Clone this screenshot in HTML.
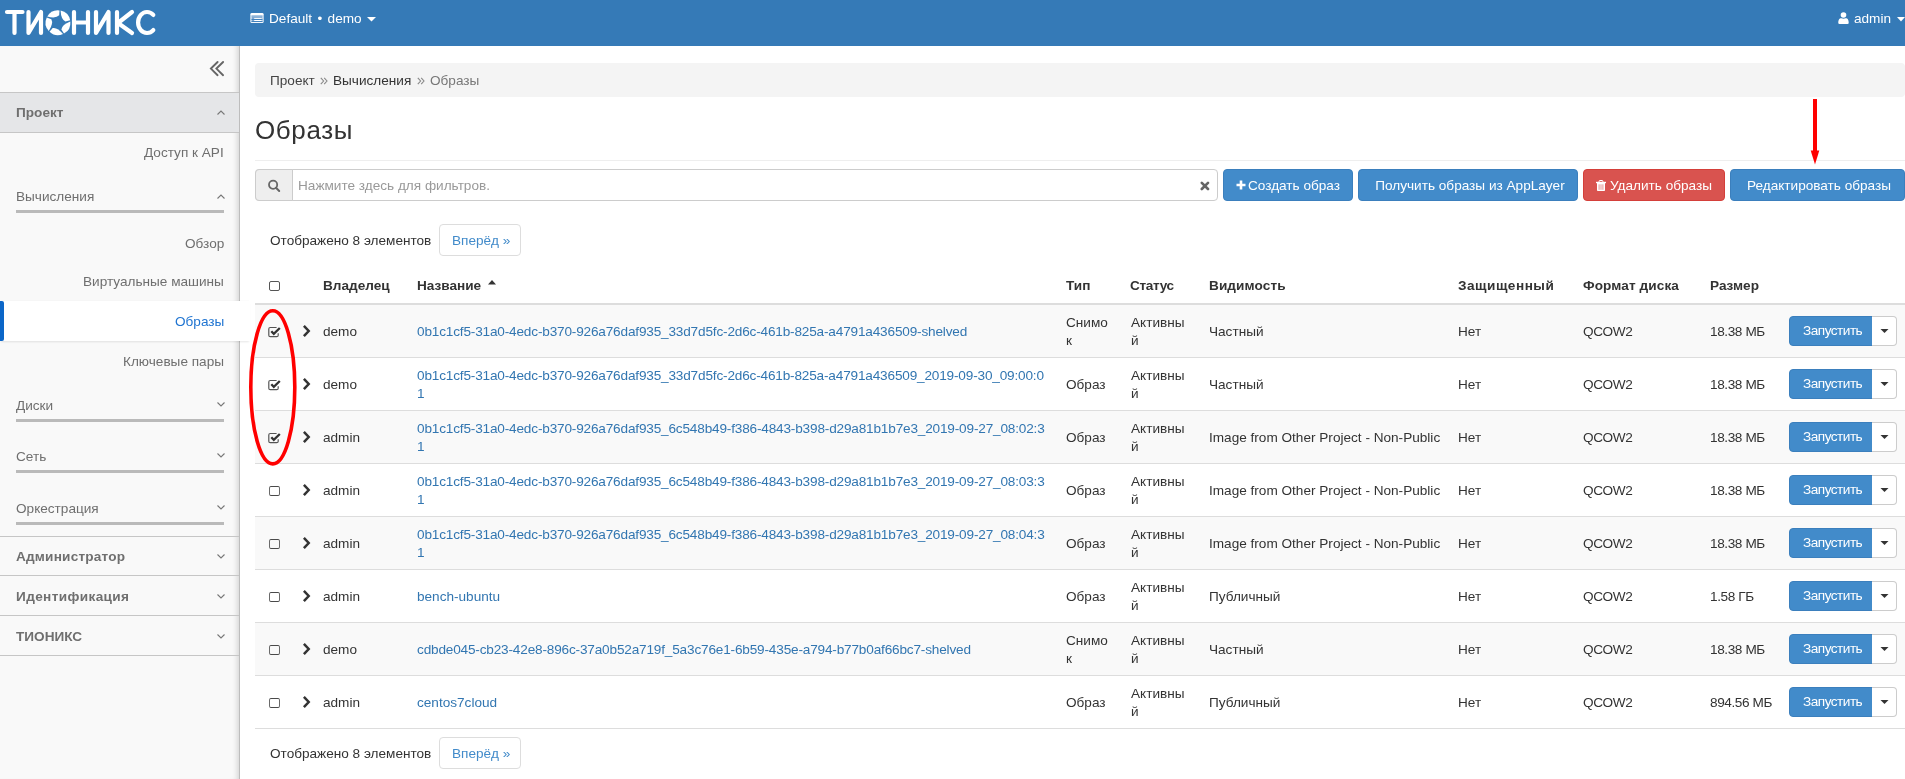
<!DOCTYPE html>
<html><head><meta charset="utf-8">
<style>
*{box-sizing:border-box;margin:0;padding:0}
html,body{width:1905px;height:779px;overflow:hidden;background:#fff;font-family:"Liberation Sans",sans-serif;color:#333}
.a{position:absolute}
.t{position:absolute;white-space:nowrap;will-change:transform;font-size:13.6px;line-height:18px}
.b{font-weight:bold}
#hdr{left:0;top:0;width:1905px;height:46px;background:#357ab7}
#side{left:0;top:46px;width:240px;height:733px;background:#f9f9f9;border-right:1px solid #bdbdbd;box-shadow:inset -6px 0 6px -5px rgba(0,0,0,.18)}
.sec{left:0;width:239px;height:40px;border-top:1px solid #c6c6c6}
.sgray{color:#6f6f6f}
.uline{left:16px;width:208px;height:3px;background:#bababa}
.chev{position:absolute}
.bc{left:255px;top:63px;width:1650px;height:34px;background:#f4f4f4;border-radius:4px}
.btn{position:absolute;will-change:transform;top:169px;height:32px;border-radius:4px;color:#fff;font-size:13.6px;line-height:31px;text-align:center;white-space:nowrap}
.bp{background:#428bca;border:1px solid #3b7fbd}
.bd{background:#d9534f;border:1px solid #d43f3a}
.row{position:absolute;left:255px;width:1650px;height:53px;border-bottom:1px solid #dddddd}
.odd{background:#f9f9f9}
.lnk{color:#3276b1}
.uu{letter-spacing:-.17px}
.ns{letter-spacing:-.4px}
</style></head><body>
<!-- header -->
<div id="hdr" class="a">
  <svg class="a" style="left:0;top:0" width="170" height="46" viewBox="0 0 170 46">
    <g fill="none" stroke="#fff" stroke-width="4.2" stroke-linecap="round" stroke-linejoin="round">
      <path d="M7 12 H22.5 M14.5 12 V33"/>
      <path d="M28.5 12 V33 L41 12 V33"/>
      <path d="M74 12 V33 M88 12 V33 M74 22.5 H88"/>
      <path d="M96 12 V33 L108.5 12 V33"/>
      <path d="M117 12 V33 M132 12 L118 23 L132 33"/>
      <path d="M153.3 14.9 A9 10.5 0 1 0 153.3 30.1"/>
    </g>
    <g fill="#fff">
<path d="M47.26 16.50 A12.4 12.4 0 0 1 59.51 10.39 L59.17 15.29 Q55.87 18.85 47.26 16.50 Z"/>
<path d="M60.58 10.57 A12.4 12.4 0 0 1 70.17 20.33 L65.41 21.53 Q61.00 19.48 60.58 10.57 Z"/>
<path d="M70.33 21.40 A12.4 12.4 0 0 1 64.01 33.55 L61.40 29.38 Q61.99 24.56 70.33 21.40 Z"/>
<path d="M63.04 34.03 A12.4 12.4 0 0 1 49.54 31.77 L52.70 28.00 Q57.46 27.07 63.04 34.03 Z"/>
<path d="M48.79 31.00 A12.4 12.4 0 0 1 46.76 17.46 L51.32 19.30 Q53.68 23.54 48.79 31.00 Z"/>
</g>
  </svg>
  <svg class="a" style="left:250px;top:12px" width="14" height="12" viewBox="0 0 14 12"><rect x="0.4" y="0.9" width="13.2" height="10.2" rx="1.4" fill="#fff"/><rect x="1.5" y="3.5" width="11" height="6.6" fill="#7fa9d3"/><rect x="1.5" y="3.5" width="11" height="1" fill="#9cbde0"/><rect x="4.2" y="5.9" width="7.5" height="1" fill="#fff"/><rect x="4.2" y="8" width="7.5" height="1" fill="#fff"/><rect x="1.5" y="7" width="11" height="0.9" fill="#3a7dba"/><rect x="1.5" y="9.1" width="11" height="0.9" fill="#3a7dba"/></svg>
  <div class="t" style="left:269px;top:10px;color:#fff;word-spacing:1.6px">Default • demo</div>
  <svg class="a" style="left:367px;top:17px" width="9" height="5" viewBox="0 0 9 5"><path d="M0 0 H9 L4.5 4.5Z" fill="#fff"/></svg>
  <svg class="a" style="left:1838px;top:12px" width="11" height="12" viewBox="0 0 11 12"><circle cx="5.5" cy="3" r="2.8" fill="#fff"/><path d="M0.3 11 C0.3 7 2 6 3.5 6.3 Q5.5 7 7.5 6.3 C9 6 10.7 7 10.7 11 Q10.7 12 9.5 12 H1.5 Q0.3 12 0.3 11Z" fill="#fff"/></svg>
  <div class="t" style="left:1854px;top:10px;color:#fff">admin</div>
  <svg class="a" style="left:1897px;top:17px" width="8" height="5" viewBox="0 0 8 5"><path d="M0 0 H8 L4 4.5Z" fill="#fff"/></svg>
</div>

<!-- sidebar -->
<div id="side" class="a"></div>
<svg class="a" style="left:208px;top:59px" width="18" height="18" viewBox="0 0 18 18"><path d="M9.6 3 L2.9 9.6 L9.6 16.2 M15.1 3 L8.4 9.6 L15.1 16.2" fill="none" stroke="#666" stroke-width="1.9" stroke-linecap="round" stroke-linejoin="miter"/></svg>
<div class="a sec" style="top:92px;background:#e5e6e8;height:41px;border-bottom:1px solid #c6c6c6"></div>
<div class="t b sgray" style="left:16px;top:104px">Проект</div>
<svg class="chev" style="left:217px;top:110px" width="8" height="5" viewBox="0 0 8 5"><path d="M0.5 4.5 L4 1 L7.5 4.5" fill="none" stroke="#777" stroke-width="1.1"/></svg>

<div class="t sgray" style="right:1681px;top:144px">Доступ к API</div>
<div class="t sgray" style="left:16px;top:188px">Вычисления</div>
<svg class="chev" style="left:217px;top:194px" width="8" height="5" viewBox="0 0 8 5"><path d="M0.5 4.5 L4 1 L7.5 4.5" fill="none" stroke="#777" stroke-width="1.1"/></svg>
<div class="a uline" style="top:210px"></div>
<div class="t sgray" style="right:1681px;top:235px">Обзор</div>
<div class="t sgray" style="right:1681px;top:273px">Виртуальные машины</div>
<div class="a" style="left:0;top:301px;width:250px;height:40px;background:#fff;box-shadow:0 2px 2px -1px rgba(0,0,0,.10),0 -1px 1px -1px rgba(0,0,0,.08)"></div>
<div class="a" style="left:0;top:301px;width:4px;height:40px;background:#0b66c8;border-radius:0 2px 2px 0"></div>
<div class="t" style="right:1681px;top:313px;color:#1f74d1">Образы</div>
<div class="t sgray" style="right:1681px;top:353px">Ключевые пары</div>

<div class="t sgray" style="left:16px;top:397px">Диски</div>
<svg class="chev" style="left:217px;top:402px" width="8" height="5" viewBox="0 0 8 5"><path d="M0.5 0.5 L4 4 L7.5 0.5" fill="none" stroke="#777" stroke-width="1.1"/></svg>
<div class="a uline" style="top:419px"></div>
<div class="t sgray" style="left:16px;top:448px">Сеть</div>
<svg class="chev" style="left:217px;top:453px" width="8" height="5" viewBox="0 0 8 5"><path d="M0.5 0.5 L4 4 L7.5 0.5" fill="none" stroke="#777" stroke-width="1.1"/></svg>
<div class="a uline" style="top:470px"></div>
<div class="t sgray" style="left:16px;top:500px">Оркестрация</div>
<svg class="chev" style="left:217px;top:505px" width="8" height="5" viewBox="0 0 8 5"><path d="M0.5 0.5 L4 4 L7.5 0.5" fill="none" stroke="#777" stroke-width="1.1"/></svg>
<div class="a uline" style="top:522px"></div>

<div class="a sec" style="top:536px"></div>
<div class="t b sgray" style="left:16px;top:548px;letter-spacing:.2px">Администратор</div>
<svg class="chev" style="left:217px;top:554px" width="8" height="5" viewBox="0 0 8 5"><path d="M0.5 0.5 L4 4 L7.5 0.5" fill="none" stroke="#777" stroke-width="1.1"/></svg>
<div class="a sec" style="top:575px"></div>
<div class="t b sgray" style="left:16px;top:588px;letter-spacing:.38px">Идентификация</div>
<svg class="chev" style="left:217px;top:594px" width="8" height="5" viewBox="0 0 8 5"><path d="M0.5 0.5 L4 4 L7.5 0.5" fill="none" stroke="#777" stroke-width="1.1"/></svg>
<div class="a sec" style="top:615px"></div>
<div class="t b sgray" style="left:16px;top:628px">ТИОНИКС</div>
<svg class="chev" style="left:217px;top:634px" width="8" height="5" viewBox="0 0 8 5"><path d="M0.5 0.5 L4 4 L7.5 0.5" fill="none" stroke="#777" stroke-width="1.1"/></svg>
<div class="a sec" style="top:655px;height:1px"></div>

<!-- main -->
<div class="a bc"></div>
<div class="t" style="left:270px;top:72px;color:#444">Проект</div>
<svg class="a" style="left:320px;top:77px" width="8" height="8" viewBox="0 0 8 8"><path d="M0.8 0.8 L3.6 4 L0.8 7.2 M4.2 0.8 L7 4 L4.2 7.2" fill="none" stroke="#888" stroke-width="1.1"/></svg>
<div class="t" style="left:333px;top:72px;color:#333">Вычисления</div>
<svg class="a" style="left:417px;top:77px" width="8" height="8" viewBox="0 0 8 8"><path d="M0.8 0.8 L3.6 4 L0.8 7.2 M4.2 0.8 L7 4 L4.2 7.2" fill="none" stroke="#888" stroke-width="1.1"/></svg>
<div class="t" style="left:430px;top:72px;color:#777">Образы</div>
<div class="t" style="left:255px;top:115px;font-size:26px;line-height:30px;color:#333;letter-spacing:.6px">Образы</div>
<div class="a" style="left:255px;top:160px;width:1650px;height:1px;background:#eee"></div>

<div class="a" style="left:255px;top:169px;width:963px;height:32px;border:1px solid #ccc;border-radius:4px;background:#fff"></div>
<div class="a" style="left:255px;top:169px;width:38px;height:32px;border:1px solid #ccc;border-radius:4px 0 0 4px;background:#eee"></div>
<svg class="a" style="left:267px;top:179px" width="14" height="14" viewBox="0 0 14 14"><circle cx="6.1" cy="5.8" r="4.1" fill="none" stroke="#666" stroke-width="1.8"/><path d="M9 8.8 L12.2 12" stroke="#666" stroke-width="2" stroke-linecap="round"/></svg>
<div class="t" style="left:298px;top:177px;color:#999">Нажмите здесь для фильтров.</div>
<svg class="a" style="left:1200px;top:181px" width="10" height="10" viewBox="0 0 10 10"><path d="M1.8 1.8 L8 8 M8 1.8 L1.8 8" stroke="#666" stroke-width="2.6" stroke-linecap="round"/></svg>
<div class="btn bp" style="left:1223px;width:130px"><svg style="position:absolute;left:12px;top:10px" width="10" height="10" viewBox="0 0 10 10"><path d="M5 0.5 V9.5 M0.5 5 H9.5" stroke="#fff" stroke-width="2.6"/></svg><span style="position:absolute;left:24px;top:0">Создать образ</span></div>
<div class="btn bp" style="left:1358px;width:220px;padding-left:4px">Получить образы из AppLayer</div>
<div class="btn bd" style="left:1583px;width:142px"><svg style="position:absolute;left:12px;top:10px" width="10" height="11" viewBox="0 0 10 11"><path d="M3.1 2 V1.3 Q3.1 0.5 4 0.5 H6 Q6.9 0.5 6.9 1.3 V2" stroke="#fff" stroke-width="1" fill="none"/><rect x="0" y="1.8" width="10" height="1.4" fill="#fff"/><path d="M1 3.1 H9 V10.2 Q9 11 8.2 11 H1.8 Q1 11 1 10.2 Z" fill="#fff"/><path d="M3.1 4.3 V9.8 M5 4.3 V9.8 M6.9 4.3 V9.8" stroke="#df7b78" stroke-width="0.8"/></svg><span style="position:absolute;left:26px;top:0">Удалить образы</span></div>
<div class="btn bp" style="left:1730px;width:175px;padding-left:3px">Редактировать образы</div>
<svg class="a" style="left:1805px;top:95px" width="20" height="75" viewBox="0 0 20 75"><path d="M10 4 V57" stroke="#ff0000" stroke-width="4"/><path d="M5.7 55.5 H14.3 L10 69.5 Z" fill="#ff0000"/></svg>
<div class="t" style="left:270px;top:232px">Отображено 8 элементов</div>
<div class="a" style="left:439px;top:224px;width:82px;height:32px;border:1px solid #ddd;border-radius:4px;background:#fff"></div>
<div class="t" style="left:452px;top:232px;color:#428bca">Вперёд »</div>
<div class="a" style="left:269px;top:281px;width:11px;height:10px;border:1px solid #555;border-radius:2px"></div>
<div class="t b" style="left:322.6px;top:277px;letter-spacing:0px">Владелец</div>
<div class="t b" style="left:417.3px;top:277px;letter-spacing:0px">Название</div>
<div class="t b" style="left:1066px;top:277px;letter-spacing:0px">Тип</div>
<div class="t b" style="left:1130.2px;top:277px;letter-spacing:-0.35px">Статус</div>
<div class="t b" style="left:1209.4px;top:277px;letter-spacing:0.1px">Видимость</div>
<div class="t b" style="left:1458.4px;top:277px;letter-spacing:0.5px">Защищенный</div>
<div class="t b" style="left:1583.3px;top:277px;letter-spacing:0.1px">Формат диска</div>
<div class="t b" style="left:1709.9px;top:277px;letter-spacing:0px">Размер</div>
<svg class="a" style="left:487px;top:279px" width="10" height="6" viewBox="0 0 10 6"><path d="M1 5.5 L5 1 L9 5.5Z" fill="#333"/></svg>
<div class="a" style="left:255px;top:303px;width:1650px;height:2px;background:#ddd"></div>
<div class="row odd" style="top:305px"></div>
<svg class="a" style="left:268px;top:326px" width="13" height="12" viewBox="0 0 13 12"><path d="M8.6 1.5 H2.3 Q0.8 1.5 0.8 3 V9.2 Q0.8 10.7 2.3 10.7 H8.7 Q10.2 10.7 10.2 9.2 V7.2" fill="none" stroke="#555" stroke-width="1.2"/><path d="M3.3 5.2 L5.8 7.8 L11.8 2" fill="none" stroke="#333" stroke-width="2.3"/></svg>
<svg class="a" style="left:302px;top:325px" width="9" height="12" viewBox="0 0 9 12"><path d="M1.9 0.9 L6.7 6 L1.9 11.1" fill="none" stroke="#333" stroke-width="2.5"/></svg>
<div class="t" style="left:322.6px;top:322.8px">demo</div>
<div class="t lnk uu" style="left:417.3px;top:322.8px">0b1c1cf5-31a0-4edc-b370-926a76daf935_33d7d5fc-2d6c-461b-825a-a4791a436509-shelved</div>
<div class="t" style="left:1066px;top:313.6px">Снимо</div>
<div class="t" style="left:1066px;top:331.6px">к</div>
<div class="t" style="left:1130.7px;top:313.6px">Активны</div>
<div class="t" style="left:1130.7px;top:331.6px">й</div>
<div class="t" style="left:1209.4px;top:322.8px">Частный</div>
<div class="t" style="left:1458.4px;top:322.8px">Нет</div>
<div class="t ns" style="left:1583.3px;top:322.8px">QCOW2</div>
<div class="t ns" style="left:1709.9px;top:322.8px">18.38 МБ</div>
<div class="a" style="left:1789px;top:316px;width:84px;height:30px;background:#428bca;border:1px solid #3b7fbd;border-radius:4px 0 0 4px"></div>
<div class="t" style="left:1803px;top:322px;color:#fff;letter-spacing:-.5px">Запустить</div>
<div class="a" style="left:1872px;top:316px;width:25px;height:30px;background:#fff;border:1px solid #ccc;border-left:none;border-radius:0 4px 4px 0"></div>
<svg class="a" style="left:1880px;top:329px" width="9" height="5" viewBox="0 0 9 5"><path d="M0.5 0 H8.5 L4.5 4Z" fill="#333"/></svg>
<div class="row" style="top:358px"></div>
<svg class="a" style="left:268px;top:379px" width="13" height="12" viewBox="0 0 13 12"><path d="M8.6 1.5 H2.3 Q0.8 1.5 0.8 3 V9.2 Q0.8 10.7 2.3 10.7 H8.7 Q10.2 10.7 10.2 9.2 V7.2" fill="none" stroke="#555" stroke-width="1.2"/><path d="M3.3 5.2 L5.8 7.8 L11.8 2" fill="none" stroke="#333" stroke-width="2.3"/></svg>
<svg class="a" style="left:302px;top:378px" width="9" height="12" viewBox="0 0 9 12"><path d="M1.9 0.9 L6.7 6 L1.9 11.1" fill="none" stroke="#333" stroke-width="2.5"/></svg>
<div class="t" style="left:322.6px;top:375.8px">demo</div>
<div class="t lnk uu" style="left:417.3px;top:366.6px">0b1c1cf5-31a0-4edc-b370-926a76daf935_33d7d5fc-2d6c-461b-825a-a4791a436509_2019-09-30_09:00:0</div>
<div class="t lnk uu" style="left:417.3px;top:384.6px">1</div>
<div class="t" style="left:1066px;top:375.8px">Образ</div>
<div class="t" style="left:1130.7px;top:366.6px">Активны</div>
<div class="t" style="left:1130.7px;top:384.6px">й</div>
<div class="t" style="left:1209.4px;top:375.8px">Частный</div>
<div class="t" style="left:1458.4px;top:375.8px">Нет</div>
<div class="t ns" style="left:1583.3px;top:375.8px">QCOW2</div>
<div class="t ns" style="left:1709.9px;top:375.8px">18.38 МБ</div>
<div class="a" style="left:1789px;top:369px;width:84px;height:30px;background:#428bca;border:1px solid #3b7fbd;border-radius:4px 0 0 4px"></div>
<div class="t" style="left:1803px;top:375px;color:#fff;letter-spacing:-.5px">Запустить</div>
<div class="a" style="left:1872px;top:369px;width:25px;height:30px;background:#fff;border:1px solid #ccc;border-left:none;border-radius:0 4px 4px 0"></div>
<svg class="a" style="left:1880px;top:382px" width="9" height="5" viewBox="0 0 9 5"><path d="M0.5 0 H8.5 L4.5 4Z" fill="#333"/></svg>
<div class="row odd" style="top:411px"></div>
<svg class="a" style="left:268px;top:432px" width="13" height="12" viewBox="0 0 13 12"><path d="M8.6 1.5 H2.3 Q0.8 1.5 0.8 3 V9.2 Q0.8 10.7 2.3 10.7 H8.7 Q10.2 10.7 10.2 9.2 V7.2" fill="none" stroke="#555" stroke-width="1.2"/><path d="M3.3 5.2 L5.8 7.8 L11.8 2" fill="none" stroke="#333" stroke-width="2.3"/></svg>
<svg class="a" style="left:302px;top:431px" width="9" height="12" viewBox="0 0 9 12"><path d="M1.9 0.9 L6.7 6 L1.9 11.1" fill="none" stroke="#333" stroke-width="2.5"/></svg>
<div class="t" style="left:322.6px;top:428.8px">admin</div>
<div class="t lnk uu" style="left:417.3px;top:419.6px">0b1c1cf5-31a0-4edc-b370-926a76daf935_6c548b49-f386-4843-b398-d29a81b1b7e3_2019-09-27_08:02:3</div>
<div class="t lnk uu" style="left:417.3px;top:437.6px">1</div>
<div class="t" style="left:1066px;top:428.8px">Образ</div>
<div class="t" style="left:1130.7px;top:419.6px">Активны</div>
<div class="t" style="left:1130.7px;top:437.6px">й</div>
<div class="t" style="left:1209.4px;top:428.8px">Image from Other Project - Non-Public</div>
<div class="t" style="left:1458.4px;top:428.8px">Нет</div>
<div class="t ns" style="left:1583.3px;top:428.8px">QCOW2</div>
<div class="t ns" style="left:1709.9px;top:428.8px">18.38 МБ</div>
<div class="a" style="left:1789px;top:422px;width:84px;height:30px;background:#428bca;border:1px solid #3b7fbd;border-radius:4px 0 0 4px"></div>
<div class="t" style="left:1803px;top:428px;color:#fff;letter-spacing:-.5px">Запустить</div>
<div class="a" style="left:1872px;top:422px;width:25px;height:30px;background:#fff;border:1px solid #ccc;border-left:none;border-radius:0 4px 4px 0"></div>
<svg class="a" style="left:1880px;top:435px" width="9" height="5" viewBox="0 0 9 5"><path d="M0.5 0 H8.5 L4.5 4Z" fill="#333"/></svg>
<div class="row" style="top:464px"></div>
<div class="a" style="left:269px;top:486px;width:11px;height:10px;border:1px solid #4a4a4a;border-left-color:#6a6a6a;border-right-color:#6a6a6a;border-radius:2px"></div>
<svg class="a" style="left:302px;top:484px" width="9" height="12" viewBox="0 0 9 12"><path d="M1.9 0.9 L6.7 6 L1.9 11.1" fill="none" stroke="#333" stroke-width="2.5"/></svg>
<div class="t" style="left:322.6px;top:481.8px">admin</div>
<div class="t lnk uu" style="left:417.3px;top:472.6px">0b1c1cf5-31a0-4edc-b370-926a76daf935_6c548b49-f386-4843-b398-d29a81b1b7e3_2019-09-27_08:03:3</div>
<div class="t lnk uu" style="left:417.3px;top:490.6px">1</div>
<div class="t" style="left:1066px;top:481.8px">Образ</div>
<div class="t" style="left:1130.7px;top:472.6px">Активны</div>
<div class="t" style="left:1130.7px;top:490.6px">й</div>
<div class="t" style="left:1209.4px;top:481.8px">Image from Other Project - Non-Public</div>
<div class="t" style="left:1458.4px;top:481.8px">Нет</div>
<div class="t ns" style="left:1583.3px;top:481.8px">QCOW2</div>
<div class="t ns" style="left:1709.9px;top:481.8px">18.38 МБ</div>
<div class="a" style="left:1789px;top:475px;width:84px;height:30px;background:#428bca;border:1px solid #3b7fbd;border-radius:4px 0 0 4px"></div>
<div class="t" style="left:1803px;top:481px;color:#fff;letter-spacing:-.5px">Запустить</div>
<div class="a" style="left:1872px;top:475px;width:25px;height:30px;background:#fff;border:1px solid #ccc;border-left:none;border-radius:0 4px 4px 0"></div>
<svg class="a" style="left:1880px;top:488px" width="9" height="5" viewBox="0 0 9 5"><path d="M0.5 0 H8.5 L4.5 4Z" fill="#333"/></svg>
<div class="row odd" style="top:517px"></div>
<div class="a" style="left:269px;top:539px;width:11px;height:10px;border:1px solid #4a4a4a;border-left-color:#6a6a6a;border-right-color:#6a6a6a;border-radius:2px"></div>
<svg class="a" style="left:302px;top:537px" width="9" height="12" viewBox="0 0 9 12"><path d="M1.9 0.9 L6.7 6 L1.9 11.1" fill="none" stroke="#333" stroke-width="2.5"/></svg>
<div class="t" style="left:322.6px;top:534.8px">admin</div>
<div class="t lnk uu" style="left:417.3px;top:525.6px">0b1c1cf5-31a0-4edc-b370-926a76daf935_6c548b49-f386-4843-b398-d29a81b1b7e3_2019-09-27_08:04:3</div>
<div class="t lnk uu" style="left:417.3px;top:543.6px">1</div>
<div class="t" style="left:1066px;top:534.8px">Образ</div>
<div class="t" style="left:1130.7px;top:525.6px">Активны</div>
<div class="t" style="left:1130.7px;top:543.6px">й</div>
<div class="t" style="left:1209.4px;top:534.8px">Image from Other Project - Non-Public</div>
<div class="t" style="left:1458.4px;top:534.8px">Нет</div>
<div class="t ns" style="left:1583.3px;top:534.8px">QCOW2</div>
<div class="t ns" style="left:1709.9px;top:534.8px">18.38 МБ</div>
<div class="a" style="left:1789px;top:528px;width:84px;height:30px;background:#428bca;border:1px solid #3b7fbd;border-radius:4px 0 0 4px"></div>
<div class="t" style="left:1803px;top:534px;color:#fff;letter-spacing:-.5px">Запустить</div>
<div class="a" style="left:1872px;top:528px;width:25px;height:30px;background:#fff;border:1px solid #ccc;border-left:none;border-radius:0 4px 4px 0"></div>
<svg class="a" style="left:1880px;top:541px" width="9" height="5" viewBox="0 0 9 5"><path d="M0.5 0 H8.5 L4.5 4Z" fill="#333"/></svg>
<div class="row" style="top:570px"></div>
<div class="a" style="left:269px;top:592px;width:11px;height:10px;border:1px solid #4a4a4a;border-left-color:#6a6a6a;border-right-color:#6a6a6a;border-radius:2px"></div>
<svg class="a" style="left:302px;top:590px" width="9" height="12" viewBox="0 0 9 12"><path d="M1.9 0.9 L6.7 6 L1.9 11.1" fill="none" stroke="#333" stroke-width="2.5"/></svg>
<div class="t" style="left:322.6px;top:587.8px">admin</div>
<div class="t lnk" style="left:417.3px;top:587.8px">bench-ubuntu</div>
<div class="t" style="left:1066px;top:587.8px">Образ</div>
<div class="t" style="left:1130.7px;top:578.6px">Активны</div>
<div class="t" style="left:1130.7px;top:596.6px">й</div>
<div class="t" style="left:1209.4px;top:587.8px">Публичный</div>
<div class="t" style="left:1458.4px;top:587.8px">Нет</div>
<div class="t ns" style="left:1583.3px;top:587.8px">QCOW2</div>
<div class="t ns" style="left:1709.9px;top:587.8px">1.58 ГБ</div>
<div class="a" style="left:1789px;top:581px;width:84px;height:30px;background:#428bca;border:1px solid #3b7fbd;border-radius:4px 0 0 4px"></div>
<div class="t" style="left:1803px;top:587px;color:#fff;letter-spacing:-.5px">Запустить</div>
<div class="a" style="left:1872px;top:581px;width:25px;height:30px;background:#fff;border:1px solid #ccc;border-left:none;border-radius:0 4px 4px 0"></div>
<svg class="a" style="left:1880px;top:594px" width="9" height="5" viewBox="0 0 9 5"><path d="M0.5 0 H8.5 L4.5 4Z" fill="#333"/></svg>
<div class="row odd" style="top:623px"></div>
<div class="a" style="left:269px;top:645px;width:11px;height:10px;border:1px solid #4a4a4a;border-left-color:#6a6a6a;border-right-color:#6a6a6a;border-radius:2px"></div>
<svg class="a" style="left:302px;top:643px" width="9" height="12" viewBox="0 0 9 12"><path d="M1.9 0.9 L6.7 6 L1.9 11.1" fill="none" stroke="#333" stroke-width="2.5"/></svg>
<div class="t" style="left:322.6px;top:640.8px">demo</div>
<div class="t lnk uu" style="left:417.3px;top:640.8px">cdbde045-cb23-42e8-896c-37a0b52a719f_5a3c76e1-6b59-435e-a794-b77b0af66bc7-shelved</div>
<div class="t" style="left:1066px;top:631.6px">Снимо</div>
<div class="t" style="left:1066px;top:649.6px">к</div>
<div class="t" style="left:1130.7px;top:631.6px">Активны</div>
<div class="t" style="left:1130.7px;top:649.6px">й</div>
<div class="t" style="left:1209.4px;top:640.8px">Частный</div>
<div class="t" style="left:1458.4px;top:640.8px">Нет</div>
<div class="t ns" style="left:1583.3px;top:640.8px">QCOW2</div>
<div class="t ns" style="left:1709.9px;top:640.8px">18.38 МБ</div>
<div class="a" style="left:1789px;top:634px;width:84px;height:30px;background:#428bca;border:1px solid #3b7fbd;border-radius:4px 0 0 4px"></div>
<div class="t" style="left:1803px;top:640px;color:#fff;letter-spacing:-.5px">Запустить</div>
<div class="a" style="left:1872px;top:634px;width:25px;height:30px;background:#fff;border:1px solid #ccc;border-left:none;border-radius:0 4px 4px 0"></div>
<svg class="a" style="left:1880px;top:647px" width="9" height="5" viewBox="0 0 9 5"><path d="M0.5 0 H8.5 L4.5 4Z" fill="#333"/></svg>
<div class="row" style="top:676px"></div>
<div class="a" style="left:269px;top:698px;width:11px;height:10px;border:1px solid #4a4a4a;border-left-color:#6a6a6a;border-right-color:#6a6a6a;border-radius:2px"></div>
<svg class="a" style="left:302px;top:696px" width="9" height="12" viewBox="0 0 9 12"><path d="M1.9 0.9 L6.7 6 L1.9 11.1" fill="none" stroke="#333" stroke-width="2.5"/></svg>
<div class="t" style="left:322.6px;top:693.8px">admin</div>
<div class="t lnk" style="left:417.3px;top:693.8px">centos7cloud</div>
<div class="t" style="left:1066px;top:693.8px">Образ</div>
<div class="t" style="left:1130.7px;top:684.6px">Активны</div>
<div class="t" style="left:1130.7px;top:702.6px">й</div>
<div class="t" style="left:1209.4px;top:693.8px">Публичный</div>
<div class="t" style="left:1458.4px;top:693.8px">Нет</div>
<div class="t ns" style="left:1583.3px;top:693.8px">QCOW2</div>
<div class="t ns" style="left:1709.9px;top:693.8px">894.56 МБ</div>
<div class="a" style="left:1789px;top:687px;width:84px;height:30px;background:#428bca;border:1px solid #3b7fbd;border-radius:4px 0 0 4px"></div>
<div class="t" style="left:1803px;top:693px;color:#fff;letter-spacing:-.5px">Запустить</div>
<div class="a" style="left:1872px;top:687px;width:25px;height:30px;background:#fff;border:1px solid #ccc;border-left:none;border-radius:0 4px 4px 0"></div>
<svg class="a" style="left:1880px;top:700px" width="9" height="5" viewBox="0 0 9 5"><path d="M0.5 0 H8.5 L4.5 4Z" fill="#333"/></svg>
<div class="t" style="left:270px;top:745px">Отображено 8 элементов</div>
<div class="a" style="left:439px;top:737px;width:82px;height:32px;border:1px solid #ddd;border-radius:4px;background:#fff"></div>
<div class="t" style="left:452px;top:745px;color:#428bca">Вперёд »</div>
<svg class="a" style="left:240px;top:300px" width="70" height="175" viewBox="0 0 70 175"><ellipse cx="32.8" cy="87.3" rx="22" ry="76.6" fill="none" stroke="#ff0000" stroke-width="3.6"/></svg>
</body></html>
